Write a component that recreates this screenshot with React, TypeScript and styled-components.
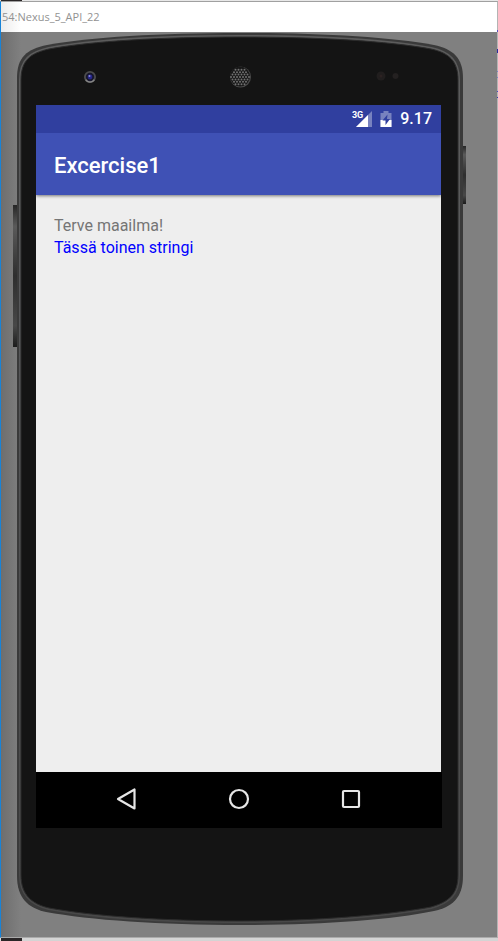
import React from "react";
import styled, { createGlobalStyle } from "styled-components";

const GlobalStyle = createGlobalStyle`
  * { box-sizing: border-box; }
  html, body { margin: 0; padding: 0; }
  body { background: #ffffff; }
`;

const Desktop = styled.div`
  min-height: 100vh;
  display: flex;
  flex-direction: column;
  overflow: hidden;
  background: #dcdcdc;
`;

const DesktopStrip = styled.div<{ $height: number; $tone: string }>`
  height: ${(p) => p.$height}px;
  flex: none;
  margin-left: 1px;
  background: linear-gradient(90deg, #2a2627 21px, ${(p) => p.$tone} 21px);
`;

const EmulatorWindow = styled.section`
  position: relative;
  flex: 1;
  display: flex;
  flex-direction: column;
  border-left: 1px solid #1883d7;
  border-right: 1px solid #b4b4b4;
  border-top: 1px solid #a0a0a0;
  border-bottom: 1px solid #aaaaaa;
  background: #ffffff;

  &::after {
    content: "";
    position: absolute;
    top: 28px;
    right: -1px;
    width: 1px;
    height: 70px;
    background: linear-gradient(
      #5a4fc0 2px, transparent 2px 19px,
      #2a2aa0 19px 23px, transparent 23px 41px,
      #7c84c4 41px 42px, transparent 42px 47px,
      #7c84c4 47px 48px, transparent 48px 61px,
      #4a4ac0 61px 62px, transparent 62px 67px,
      #3a3aa8 67px 68px, transparent 68px
    );
  }
`;

const TitleBar = styled.header`
  height: 30px;
  flex: none;
  display: flex;
  align-items: center;
  padding-left: 1px;
  background: linear-gradient(90deg, #ececec, #ffffff 20px);
`;

const WindowTitle = styled.h1`
  margin: 0;
  font: 400 11px/16px "Open Sans", "Noto Sans", sans-serif;
  color: #929292;
  white-space: nowrap;
`;

const Canvas = styled.main`
  flex: 1;
  display: flex;
  padding: 0 29px 12px 11px;
  background: linear-gradient(90deg, #6e6e6e, #808080 20px);
`;

const Phone = styled.div`
  position: relative;
  flex: 1;
  display: flex;
  flex-direction: column;
  padding: 0 27px 97px 24px;
`;

const BodyArt = styled.svg`
  position: absolute;
  inset: 0;
  width: 100%;
  height: 100%;
`;

const SensorRow = styled.div`
  position: relative;
  height: 73px;
  flex: none;
  display: grid;
  grid-template-columns: 1fr auto 1fr;
  align-items: center;
  padding: 17px 40px 0 47px;
`;

const Sensor = styled.svg<{ $end?: boolean }>`
  display: block;
  justify-self: ${(p) => (p.$end ? "end" : "start")};
`;

const Screen = styled.div`
  position: relative;
  flex: 1;
  display: flex;
  flex-direction: column;
  background: #eeeeee;
  font-family: Roboto, sans-serif;
`;

const StatusBar = styled.div`
  height: 28px;
  flex: none;
  display: flex;
  align-items: center;
  justify-content: flex-end;
  gap: 8px;
  padding-right: 9px;
  background: #303f9f;
  color: #ffffff;
`;

const StatusIcon = styled.svg`
  display: block;
`;

const Signal = styled.div`
  display: flex;
  align-items: flex-start;
`;

const NetworkType = styled.span`
  margin-right: -7px;
  font-size: 9px;
  line-height: 9px;
  font-weight: 700;
`;

const Clock = styled.time`
  font-size: 16px;
  line-height: 20px;
  font-weight: 500;
`;

const AppBar = styled.header`
  position: relative;
  height: 62px;
  flex: none;
  display: flex;
  align-items: center;
  padding: 4px 18px 0;
  background: #3f51b5;
  box-shadow: 0 1px 3px rgba(0, 0, 0, 0.5);
  clip-path: inset(0 0 -6px 0);
`;

const AppTitle = styled.h2`
  margin: 0;
  color: #ffffff;
  font-size: 22px;
  line-height: 28px;
  font-weight: 500;
`;

const Content = styled.div`
  flex: 1;
  padding: 20px 18px;
`;

const Line = styled.p<{ $color: string }>`
  margin: 0;
  font-size: 16px;
  line-height: 22px;
  color: ${(p) => p.$color};
`;

const NavBar = styled.nav`
  height: 56px;
  flex: none;
  display: grid;
  grid-template-columns: repeat(3, 112px);
  justify-content: center;
  margin-right: -1px;
  padding: 0 1px 2px 0;
  background: #000000;
`;

const NavButton = styled.button`
  display: flex;
  align-items: center;
  justify-content: center;
  padding: 0;
  border: 0;
  background: transparent;
  color: #e6e6e6;
`;

const OUTLINE =
  "M17 78 C17 57 27 49 47 45 C90 37 160 33 240 33 C320 33 390 37 434 45 C453 49 463 58 463 78 L463 876 C463 898 452 907 434 911 C390 920 320 925 240 925 C160 925 90 920 46 912 C28 908 17 898 17 876 Z";

const FACE =
  "M21 80 C21 60 31 53 49 49 C92 41 162 37 240 37 C318 37 388 41 431 49 C449 53 458 61 458 80 L458 875 C458 895 448 902 431 907 C388 915 318 921 240 921 C162 921 92 916 49 908 C32 904 21 895 21 875 Z";

const PhoneBody = () => (
  <BodyArt viewBox="12 32 456 893" preserveAspectRatio="none" aria-hidden="true">
    <defs>
      <linearGradient id="side" x1="0" y1="0" x2="0" y2="1">
        <stop offset="0" stopColor="#262626" />
        <stop offset="0.15" stopColor="#5a5a5a" />
        <stop offset="0.5" stopColor="#2e2e2e" />
        <stop offset="0.85" stopColor="#484848" />
        <stop offset="1" stopColor="#1c1c1c" />
      </linearGradient>
      <linearGradient id="rim" x1="0" y1="0" x2="0" y2="1">
        <stop offset="0" stopColor="#5c5c5c" />
        <stop offset="0.3" stopColor="#58595b" />
        <stop offset="1" stopColor="#484848" />
      </linearGradient>
    </defs>
    <rect x="13" y="205" width="5" height="142" fill="url(#side)" />
    <rect x="462" y="146" width="4" height="58" fill="url(#side)" />
    <path d={OUTLINE} fill="#3a3a3a" />
    <path d={FACE} fill="#141414" stroke="url(#rim)" strokeWidth="4" />
    <path d={FACE} fill="#141414" stroke="#2b2b2b" strokeWidth="1" />
  </BodyArt>
);

const GRILLE: Array<[number, number]> = [];
for (let row = -4; row <= 4; row++) {
  for (let col = -4; col <= 4; col++) {
    const x = col * 3 + (row % 2 ? 1.5 : 0);
    const y = row * 2.4;
    if (x * x + y * y < 92) GRILLE.push([10 + x, 11 + y]);
  }
}

const Camera = () => (
  <Sensor width="14" height="14" viewBox="0 0 14 14" aria-hidden="true">
    <circle cx="7" cy="7" r="6" fill="#4c4c4c" />
    <path d="M2 10 A6 6 0 0 0 12 10 L10 9 H4 Z" fill="#858585" />
    <circle cx="7" cy="7" r="4.2" fill="#17172c" />
    <circle cx="7" cy="7" r="2.4" fill="#25258a" />
    <circle cx="6.5" cy="6" r="1" fill="#8c8cd8" />
  </Sensor>
);

const Speaker = () => (
  <Sensor width="24" height="22" viewBox="0 0 24 22" aria-hidden="true">
    <circle cx="10.5" cy="11" r="10.5" fill="#4a4a4a" />
    <circle cx="10" cy="10.5" r="10" fill="#181818" />
    {GRILLE.map(([x, y]) => (
      <circle key={`${x}-${y}`} cx={x} cy={y} r="1" fill="#707070" />
    ))}
  </Sensor>
);

const Proximity = () => (
  <Sensor $end width="26" height="12" viewBox="0 0 26 12" aria-hidden="true">
    <circle cx="6" cy="5" r="4.5" fill="#211e1e" />
    <circle cx="6" cy="5" r="1.5" fill="#2c2222" />
    <circle cx="20.5" cy="5" r="3" fill="#242121" />
  </Sensor>
);

export default function App() {
  return (
    <>
      <GlobalStyle />
      <Desktop>
        <DesktopStrip $height={1} $tone="#e8e8e8" />
        <EmulatorWindow>
          <TitleBar>
            <WindowTitle>54:Nexus_5_API_22</WindowTitle>
          </TitleBar>
          <Canvas>
            <Phone>
              <PhoneBody />
              <SensorRow>
                <Camera />
                <Speaker />
                <Proximity />
              </SensorRow>
              <Screen>
                <StatusBar>
                  <Signal>
                    <NetworkType>3G</NetworkType>
                    <StatusIcon width="16" height="16" viewBox="0 0 16 16" aria-label="Signal">
                      <path d="M16 0 V16 H0 Z" fill="#7882bf" />
                      <path d="M12 4 V16 H0 Z" fill="#ffffff" />
                    </StatusIcon>
                  </Signal>
                  <StatusIcon width="12" height="16" viewBox="0 0 12 16" aria-label="Battery charging">
                    <path d="M3.5 0 H8.5 V2 H11.5 V16 H0.5 V2 H3.5 Z" fill="#7882bf" />
                    <path d="M0.5 9 H11.5 V16 H0.5 Z" fill="#ffffff" />
                    <path d="M7.5 3.5 L2.5 9.5 H5.5 V14 L10 8 H7 Z" fill="#303f9f" />
                  </StatusIcon>
                  <Clock>9.17</Clock>
                </StatusBar>
                <AppBar>
                  <AppTitle>Excercise1</AppTitle>
                </AppBar>
                <Content>
                  <Line $color="#757575">Terve maailma!</Line>
                  <Line $color="#0000ff">Tässä toinen stringi</Line>
                </Content>
                <NavBar>
                  <NavButton aria-label="Back">
                    <svg width="22" height="24" viewBox="0 0 22 24" fill="none" stroke="currentColor" strokeWidth="2.2" strokeLinejoin="round">
                      <path d="M18.5 2.5 V21.5 L2 12 Z" />
                    </svg>
                  </NavButton>
                  <NavButton aria-label="Home">
                    <svg width="22" height="22" viewBox="0 0 22 22" fill="none" stroke="currentColor" strokeWidth="2.2">
                      <circle cx="11" cy="11" r="9" />
                    </svg>
                  </NavButton>
                  <NavButton aria-label="Recent apps">
                    <svg width="20" height="20" viewBox="0 0 20 20" fill="none" stroke="currentColor" strokeWidth="2.2">
                      <rect x="2" y="2" width="16" height="16" rx="1" />
                    </svg>
                  </NavButton>
                </NavBar>
              </Screen>
            </Phone>
          </Canvas>
        </EmulatorWindow>
        <DesktopStrip $height={3} $tone="#d4d4d4" />
      </Desktop>
    </>
  );
}
